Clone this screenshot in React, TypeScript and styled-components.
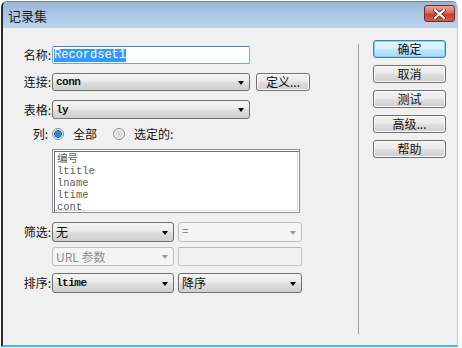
import React from "react";
import styled, { createGlobalStyle } from "styled-components";

const Global = createGlobalStyle`
  html, body { margin: 0; padding: 0; background: #ffffff; }
  body {
    font-family: "Noto Sans CJK SC", "Liberation Sans", sans-serif;
    font-size: 12px;
    color: #000;
  }
`;

const Window = styled.div`
  margin: 1px 0 0 1px;
  width: 457px;
  height: 346px;
  box-sizing: border-box;
  display: flex;
  flex-direction: column;
  border-left: 2px solid #2b2b2b;
  border-right: 1px solid #b9c7d6;
  border-bottom: 2px solid #4bbad9;
  border-top: 1px solid #6f84a0;
  border-radius: 6px 6px 0 0;
  background: #f0f0f0;
  overflow: hidden;
`;

const TitleBar = styled.div`
  height: 26px;
  flex: none;
  display: flex;
  align-items: center;
  justify-content: space-between;
  padding: 0 2px 0 5px;
  background: linear-gradient(#9bb6d8, #b0c9e6 60%, #bdd4ec);
`;

const Title = styled.span`
  font-size: 13px;
  color: #1b1b1b;
  line-height: 1;
  margin-top: 1px;
`;

const CloseButton = styled.div`
  width: 31px;
  height: 17px;
  box-sizing: border-box;
  border: 1px solid #6e2a22;
  border-radius: 3px;
  background: linear-gradient(#e8a899, #d56c5a 45%, #c3412f 55%, #d2624d);
  display: flex;
  align-items: center;
  justify-content: center;
  margin-top: -3px;
`;

const Client = styled.div`
  flex: 1;
  display: flex;
`;

const LeftPanel = styled.div`
  width: 355px;
  flex: none;
  display: flex;
  flex-direction: column;
  padding-top: 18px;
`;

const Row = styled.div<{ $top: number; $h: number }>`
  display: flex;
  align-items: center;
  height: ${(p) => p.$h}px;
  margin-top: ${(p) => p.$top}px;
`;

const Label = styled.div<{ $pad?: number }>`
  width: 49px;
  box-sizing: border-box;
  flex: none;
  text-align: right;
  padding-right: ${(p) => p.$pad ?? 1}px;
  font-size: 12px;
  line-height: 12px;
  color: #111;
`;

const TextInput = styled.div<{ $w: number; $disabled?: boolean; $gap?: number }>`
  width: ${(p) => p.$w}px;
  height: 100%;
  box-sizing: border-box;
  margin-left: ${(p) => p.$gap ?? 0}px;
  border: 1px solid ${(p) => (p.$disabled ? "#c2c2c2" : "#7ea3c8")};
  border-top-color: ${(p) => (p.$disabled ? "#b8b8b8" : "#5b7fa8")};
  border-radius: 2px;
  background: ${(p) => (p.$disabled ? "#f1f1f1" : "#ffffff")};
  display: flex;
  align-items: center;
  padding-left: 1px;
`;

const Selected = styled.span`
  font-family: "Liberation Mono", monospace;
  font-size: 12px;
  line-height: 13px;
  background: #3399ff;
  color: #fff;
`;

const Select = styled.div<{ $w: number; $disabled?: boolean; $gap?: number }>`
  width: ${(p) => p.$w}px;
  height: 100%;
  box-sizing: border-box;
  margin-left: ${(p) => p.$gap ?? 0}px;
  border: 1px solid ${(p) => (p.$disabled ? "#bcbcbc" : "#707070")};
  border-radius: 3px;
  background: ${(p) =>
    p.$disabled
      ? "#f4f4f4"
      : "linear-gradient(#f4f4f4, #ebebeb 45%, #dddddd 55%, #cfcfcf)"};
  display: flex;
  align-items: center;
  justify-content: space-between;
  padding: 0 5px 0 3px;
`;

const MonoValue = styled.span<{ $disabled?: boolean; $light?: boolean }>`
  font-family: "Liberation Mono", monospace;
  font-size: 11px;
  font-weight: ${(p) => (p.$light ? "normal" : "bold")};
  letter-spacing: -0.5px;
  color: ${(p) => (p.$disabled ? "#8a8a8a" : "#111")};
`;

const CnValue = styled.span<{ $disabled?: boolean }>`
  font-size: 12px;
  line-height: 12px;
  color: ${(p) => (p.$disabled ? "#8d8d8d" : "#111")};
`;

const Arrow = styled.span<{ $disabled?: boolean }>`
  width: 0;
  height: 0;
  border-left: 3.5px solid transparent;
  border-right: 3.5px solid transparent;
  border-top: 4px solid ${(p) => (p.$disabled ? "#9a9a9a" : "#000")};
  margin-top: 1px;
`;

const PushButton = styled.div<{ $w: number; $default?: boolean; $gap?: number }>`
  width: ${(p) => p.$w}px;
  height: 18px;
  box-sizing: border-box;
  margin-left: ${(p) => p.$gap ?? 0}px;
  border: 1px solid ${(p) => (p.$default ? "#3c7fb1" : "#707070")};
  border-radius: 3px;
  background: ${(p) =>
    p.$default
      ? "linear-gradient(#eaf6fd, #d9f0fc 45%, #bee6fd 55%, #a7d9f5)"
      : "linear-gradient(#f2f2f2, #ebebeb 45%, #dddddd 55%, #cfcfcf)"};
  box-shadow: ${(p) => (p.$default ? "inset 0 0 0 1px #7fd2f7" : "inset 0 0 0 1px #fcfcfc")};
  display: flex;
  align-items: center;
  justify-content: center;
  font-size: 12px;
  line-height: 12px;
  color: #111;
`;

const RadioRow = styled.div`
  display: flex;
  align-items: center;
`;

const RadioCircle = styled.span<{ $on?: boolean; $gap: number }>`
  width: 12px;
  height: 12px;
  box-sizing: border-box;
  border-radius: 50%;
  margin-left: ${(p) => p.$gap}px;
  border: 1px solid #8c8c8c;
  background: ${(p) =>
    p.$on
      ? "radial-gradient(circle, #1b77c9 0, #2f8fdc 2.5px, #0d5ea8 3.5px, #dcdcdc 4px, #f4f4f4 5px)"
      : "radial-gradient(circle, #cfcfcf 0, #e3e3e3 3px, #f6f6f6 5px)"};
  flex: none;
`;

const RadioText = styled.span<{ $gap: number }>`
  margin-left: ${(p) => p.$gap}px;
  font-size: 12px;
  line-height: 12px;
  color: #111;
`;

const ListBox = styled.div`
  margin-left: 49px;
  margin-top: 8px;
  width: 248px;
  height: 64px;
  box-sizing: border-box;
  border: 1px solid #8e8f91;
  background: #ffffff;
  box-shadow: inset 1px 1px 0 #ffffff, inset 2px 2px 0 #6f6f6f, inset -1px -1px 0 #ffffff, inset -2px -2px 0 #d9d9d9;
  padding: 3px 0 0 4px;
  display: flex;
  flex-direction: column;
`;

const ListItem = styled.div<{ $cn?: boolean }>`
  height: 12px;
  flex: none;
  line-height: 12px;
  font-family: "Liberation Mono", "Noto Sans CJK SC", monospace;
  font-size: ${(p) => (p.$cn ? 10.6 : 10.5)}px;
  color: #5e5e5e;
`;

const Separator = styled.div`
  width: 1px;
  height: 290px;
  margin-top: 16px;
  background: #a0a0a0;
  flex: none;
`;

const ButtonCol = styled.div`
  display: flex;
  flex-direction: column;
  gap: 7px;
  padding-top: 12px;
  margin-left: 14px;
`;

export default function App() {
  return (
    <>
      <Global />
      <Window>
        <TitleBar>
          <Title>记录集</Title>
          <CloseButton>
            <svg width="13" height="10" viewBox="0 0 13 10">
              <path d="M2 1 L11 9 M11 1 L2 9" stroke="#5a1c14" strokeWidth="3.6" strokeLinecap="square" />
              <path d="M2 1 L11 9 M11 1 L2 9" stroke="#ffffff" strokeWidth="2.2" strokeLinecap="square" />
            </svg>
          </CloseButton>
        </TitleBar>
        <Client>
          <LeftPanel>
            <Row $top={0} $h={18}>
              <Label>名称:</Label>
              <TextInput $w={198}>
                <Selected>Recordset1</Selected>
              </TextInput>
            </Row>
            <Row $top={9} $h={18}>
              <Label>连接:</Label>
              <Select $w={198}>
                <MonoValue>conn</MonoValue>
                <Arrow />
              </Select>
              <PushButton $w={54} $gap={6}>定义...</PushButton>
            </Row>
            <Row $top={9} $h={19}>
              <Label>表格:</Label>
              <Select $w={198}>
                <MonoValue>ly</MonoValue>
                <Arrow />
              </Select>
            </Row>
            <Row $top={8} $h={14}>
              <Label $pad={4}>列:</Label>
              <RadioRow>
                <RadioCircle $on $gap={0} />
                <RadioText $gap={9}>全部</RadioText>
                <RadioCircle $gap={16} />
                <RadioText $gap={9}>选定的:</RadioText>
              </RadioRow>
            </Row>
            <ListBox>
              <ListItem $cn>编号</ListItem>
              <ListItem>ltitle</ListItem>
              <ListItem>lname</ListItem>
              <ListItem>ltime</ListItem>
              <ListItem>cont</ListItem>
            </ListBox>
            <Row $top={9} $h={20}>
              <Label>筛选:</Label>
              <Select $w={122}>
                <CnValue>无</CnValue>
                <Arrow />
              </Select>
              <Select $w={124} $gap={4} $disabled>
                <MonoValue $disabled $light>=</MonoValue>
                <Arrow $disabled />
              </Select>
            </Row>
            <Row $top={5} $h={19}>
              <Label />
              <Select $w={122} $disabled>
                <CnValue $disabled>URL 参数</CnValue>
                <Arrow $disabled />
              </Select>
              <TextInput $w={124} $gap={4} $disabled />
            </Row>
            <Row $top={7} $h={20}>
              <Label>排序:</Label>
              <Select $w={122}>
                <MonoValue>ltime</MonoValue>
                <Arrow />
              </Select>
              <Select $w={124} $gap={4}>
                <CnValue>降序</CnValue>
                <Arrow />
              </Select>
            </Row>
          </LeftPanel>
          <Separator />
          <ButtonCol>
            <PushButton $w={73} $default>确定</PushButton>
            <PushButton $w={73}>取消</PushButton>
            <PushButton $w={73}>测试</PushButton>
            <PushButton $w={73}>高级...</PushButton>
            <PushButton $w={73}>帮助</PushButton>
          </ButtonCol>
        </Client>
      </Window>
    </>
  );
}
